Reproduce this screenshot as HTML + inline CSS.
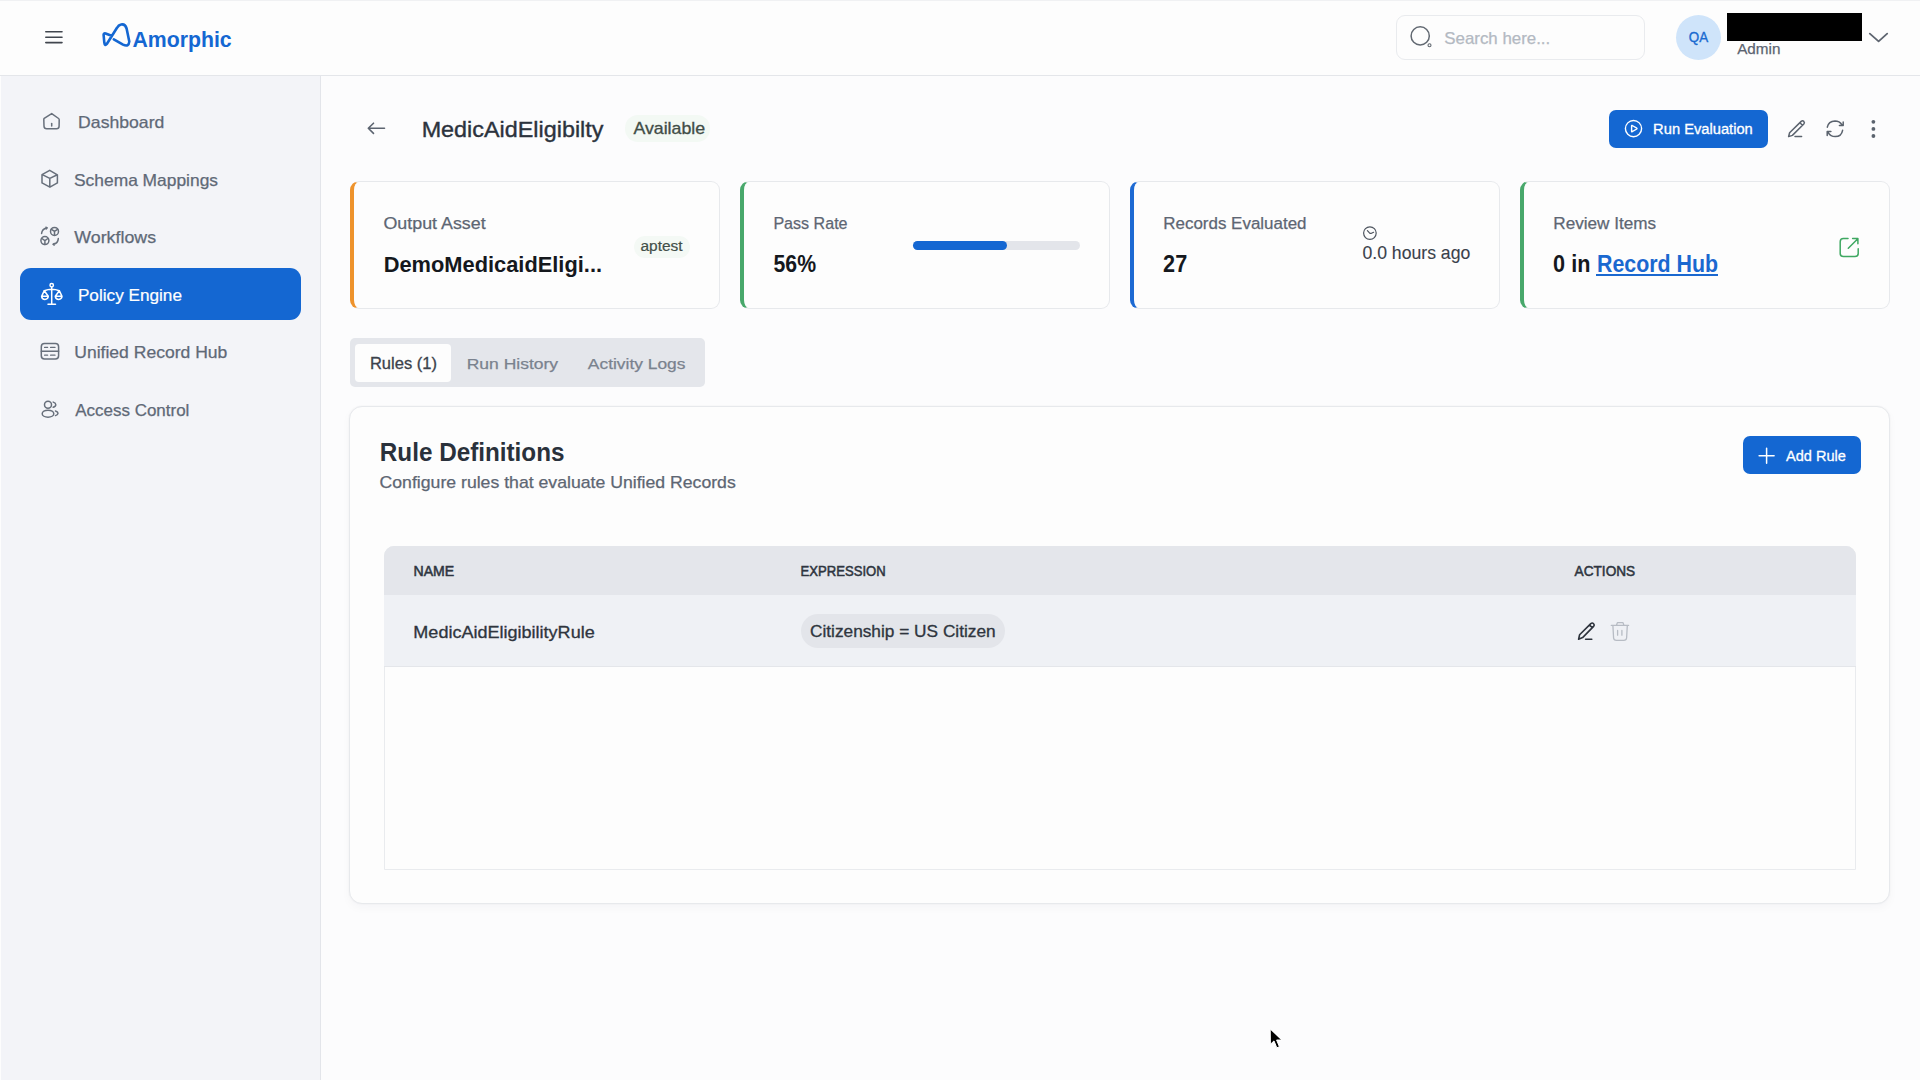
<!DOCTYPE html>
<html><head><meta charset="utf-8"><title>Amorphic - Policy Engine</title>
<style>
*{margin:0;padding:0;box-sizing:border-box}
html,body{width:1920px;height:1080px;overflow:hidden;background:#fcfcfd;font-family:"Liberation Sans",sans-serif}
.t{position:absolute;white-space:nowrap;line-height:1.1172;transform-origin:0 0}
.bl{display:inline-block;width:0;height:0;vertical-align:baseline}
.a{position:absolute}
svg{position:absolute;overflow:visible}
</style></head>
<body>
<!-- header -->
<div class="a" style="left:0;top:0;width:1920px;height:75px;background:#fdfdfd"></div>
<div class="a" style="left:0;top:0;width:1920px;height:1px;background:#f0f1f3"></div>
<div class="a" style="left:0;top:75px;width:1920px;height:1px;background:#e4e6ea"></div>
<!-- sidebar -->
<div class="a" style="left:0;top:76px;width:320px;height:1004px;background:#f3f4f8"></div>
<div class="a" style="left:0;top:76px;width:1px;height:1004px;background:#fdfdfd"></div>
<div class="a" style="left:320px;top:76px;width:1px;height:1004px;background:#e3e5ea"></div>
<div class="a" style="left:20px;top:268px;width:281px;height:52px;background:#1467d2;border-radius:11px"></div>
<!-- search -->
<div class="a" style="left:1396px;top:15px;width:249px;height:45px;border:1px solid #e9ebee;border-radius:9px;background:#fdfdfd"></div>
<!-- avatar -->
<div class="a" style="left:1676px;top:15px;width:45px;height:45px;border-radius:50%;background:#cfe4fa"></div>
<div class="a" style="left:1727px;top:13px;width:135px;height:28px;background:#000"></div>
<!-- available badge -->
<div class="a" style="left:625px;top:115px;width:85px;height:27px;border-radius:13px;background:#f3f9f4"></div>
<!-- run evaluation -->
<div class="a" style="left:1609px;top:110px;width:159px;height:38px;border-radius:7px;background:#1467d2"></div>
<!-- cards -->
<div class="a" style="left:350px;top:181px;width:370px;height:128px;border:1px solid #e7e9ec;border-left:4px solid #ee932c;border-radius:9px;background:#fdfdfd"></div>
<div class="a" style="left:740px;top:181px;width:370px;height:128px;border:1px solid #e7e9ec;border-left:4px solid #48a86b;border-radius:9px;background:#fdfdfd"></div>
<div class="a" style="left:1130px;top:181px;width:370px;height:128px;border:1px solid #e7e9ec;border-left:4px solid #1d6ad3;border-radius:9px;background:#fdfdfd"></div>
<div class="a" style="left:1520px;top:181px;width:370px;height:128px;border:1px solid #e7e9ec;border-left:4px solid #48a86b;border-radius:9px;background:#fdfdfd"></div>
<div class="a" style="left:634px;top:236px;width:56px;height:22px;border-radius:11px;background:#f4f9f5"></div>
<div class="a" style="left:913px;top:241px;width:167px;height:9px;border-radius:5px;background:#e3e5ea"></div>
<div class="a" style="left:913px;top:241px;width:94px;height:9px;border-radius:5px;background:#1467d2"></div>
<div class="a" style="left:1596px;top:273.5px;width:122px;height:2px;background:#1a68d0"></div>
<!-- tabs -->
<div class="a" style="left:350px;top:338px;width:355px;height:49px;border-radius:5px;background:#e4e6eb"></div>
<div class="a" style="left:355px;top:344px;width:96px;height:38px;border-radius:4px;background:#fdfdfd"></div>
<!-- panel -->
<div class="a" style="left:349px;top:406px;width:1541px;height:498px;border:1px solid #e7e9ec;border-radius:13px;background:#fdfdfd;box-shadow:0 0 2px rgba(30,40,60,0.05),0 4px 10px rgba(30,40,60,0.03)"></div>
<div class="a" style="left:1743px;top:436px;width:118px;height:38px;border-radius:7px;background:#1467d2"></div>
<!-- table -->
<div class="a" style="left:384px;top:546px;width:1472px;height:324px;border:1px solid #e9ebee;border-radius:10px 10px 0 0;background:#fdfdfd"></div>
<div class="a" style="left:384px;top:546px;width:1472px;height:49px;border-radius:10px 10px 0 0;background:#e4e6eb"></div>
<div class="a" style="left:384px;top:595px;width:1472px;height:72px;background:#eff1f5;border-bottom:1px solid #e4e6ea"></div>
<div class="a" style="left:801px;top:614px;width:204px;height:34px;border-radius:17px;background:#e3e5ea"></div>

<svg width="1920" height="1080" style="left:0;top:0" fill="none" stroke-linecap="round" stroke-linejoin="round">
 <!-- hamburger -->
 <g stroke="#41464e" stroke-width="1.6"><path d="M45.8 31.8H62M45.8 37.2H62M45.8 42.6H62"/></g>
 <!-- logo mark -->
 <path stroke="#1467d2" stroke-width="2.6" d="M113.8 39.3L123 44.6Q128.8 47.5 129.3 41.5L126.6 28.5Q125 23.5 121 24.6Q118.5 25.2 117 27.8L106.8 44Q104.8 46.5 104.3 42.5L103.6 34.8Q103.6 32.8 105.6 33.5L111.5 35.8"/>
 <!-- sidebar icons -->
 <g stroke="#676f7b" stroke-width="1.5">
  <path d="M51.7 113.6L44.2 118.4Q43.8 118.8 43.8 119.5L44 126.3Q44.2 128.8 46.6 128.8H56.6Q59 128.8 59.1 126.3L59.2 119.7Q59.2 118.9 58.6 118.5Z"/>
  <path d="M51.7 123.6V126.1"/>
  <path d="M49.7 170.3L57.4 174.8V182.9L49.9 187.2L42 182.9V174.7Z M42.3 174.7L49.8 178.4L57.3 174.8 M49.8 178.4V187"/>
  <circle cx="54.5" cy="231.4" r="4"/><path d="M54.5 231.4V235.2M54.5 231.4L51.5 229.3M54.5 231.4L57.5 229.3"/>
  <circle cx="44.9" cy="240.6" r="4"/><path d="M44.9 240.6V244.4M44.9 240.6L41.9 238.5M44.9 240.6L47.9 238.5"/>
  <path d="M41.6 233.5Q42 229 46.6 228"/><path d="M45.8 227.2L47.3 227.8L46.2 229" stroke-width="1.3"/>
  <path d="M58.3 238.6Q58 243.2 53.6 244.2"/><path d="M54.4 243.4L52.9 244.2L54.2 245.2" stroke-width="1.3"/>
  <rect x="41.3" y="343.5" width="17.3" height="15.5" rx="3.2"/><path d="M41.3 351.3H58.6"/>
  <path d="M44.6 347.4H47.6M50.6 347.4H55M44.6 355.2H47.6M50.6 355.2H55" stroke-width="1.3"/>
  <circle cx="48" cy="404.8" r="3.5"/><ellipse cx="48" cy="413.7" rx="5.8" ry="3.5"/>
  <path d="M53.2 402.1Q55.8 403 55.8 404.7Q55.8 406.5 53.2 407.3M55.5 411Q58 411.8 58 413.3Q58 414.9 55.5 415.6"/>
 </g>
 <g stroke="#ffffff" stroke-width="1.5">
  <circle cx="51.7" cy="285.3" r="1.7"/>
  <path d="M51.7 287.2V304M48 304.2H55.5M44.3 290.7Q51.7 287.6 59.3 290.7"/>
  <path d="M44.3 290.7L41.6 296.3H48.3Z M41.6 296.3Q42 299.4 45 299.4Q48 299.4 48.3 296.3"/>
  <path d="M59.3 290.7L55.3 296.3H62Z M55.3 296.3Q55.7 299.4 58.7 299.4Q61.7 299.4 62 296.3"/>
 </g>
 <!-- search icon -->
 <g stroke="#626972" stroke-width="1.5"><circle cx="1420.2" cy="35.9" r="9.1"/><circle cx="1429.5" cy="45.3" r="1.5" stroke-width="1.1"/></g>
 <!-- chevron -->
 <path stroke="#5e6570" stroke-width="1.8" d="M1869.8 33.6L1878.6 41.4L1887.2 33.6"/>
 <!-- back arrow -->
 <path stroke="#5c6470" stroke-width="1.6" d="M384.5 128.3H368.5M373.5 123.2L368.3 128.3L373.5 133.4"/>
 <!-- play -->
 <g stroke="#ffffff" stroke-width="1.4"><circle cx="1633.5" cy="128.6" r="8.1"/><path d="M1631.6 125.8V131.4Q1631.6 132 1632.2 131.7L1636.8 129Q1637.3 128.6 1636.8 128.2L1632.2 125.5Q1631.6 125.2 1631.6 125.8Z"/></g>
 <!-- header pencil / refresh / dots -->
 <g stroke="#5b636e" stroke-width="1.5">
  <path d="M1788.6 136.6L1789.6 132.8L1801.2 121.4Q1802.6 120.2 1803.8 121.4Q1805 122.7 1803.8 124L1792.4 135.4Z M1800 122.8L1802.4 125.2 M1795 136.6H1801.6"/>
  <path d="M1827.3 127.2Q1828.5 121.2 1835 121Q1839.5 121 1842 124.8M1843.2 121.9V125.6H1839.4M1842.6 130.3Q1841.5 136.5 1835.2 136.6Q1830.5 136.6 1828.2 132.6M1827.2 135.5V131.4H1830.9"/>
 </g>
 <g fill="#5b636e"><circle cx="1873.4" cy="121.8" r="1.9"/><circle cx="1873.4" cy="128.9" r="1.9"/><circle cx="1873.4" cy="136" r="1.9"/></g>
 <!-- clock -->
 <g stroke="#4d545e" stroke-width="1.2"><circle cx="1369.9" cy="233.1" r="6.3"/><path d="M1367.4 230.6L1369.5 232.9Q1370.5 233.6 1371.5 233.2L1373.6 232.3"/></g>
 <!-- external link -->
 <g stroke="#3fa862" stroke-width="1.5"><path d="M1848 238.6H1843.4Q1840.2 238.6 1840.2 241.8V253.4Q1840.2 256.5 1843.4 256.5H1855Q1858.2 256.5 1858.2 253.4V248.8 M1848.3 248.2L1857.8 238.7 M1852.6 238.6H1857.9V243.8"/></g>
 <!-- plus -->
 <g stroke="#ffffff" stroke-width="1.5"><path d="M1766.6 448.2V463.2M1759.1 455.7H1774.1"/></g>
 <!-- row pencil -->
 <g stroke="#2d333c" stroke-width="1.6"><path d="M1578.6 639.2L1579.6 634.8L1590.8 623.6Q1592.3 622.4 1593.6 623.7Q1594.9 625 1593.6 626.4L1582.6 637.6Z M1589.6 625L1592.2 627.6 M1585.6 639.2H1591.8"/></g>
 <!-- trash -->
 <g stroke="#b7bcc4" stroke-width="1.3"><path d="M1611.3 625.4H1628.6 M1616.5 625.2L1617.4 622.6H1623L1623.9 625.2 M1612.9 625.6L1613.6 638Q1613.8 640.4 1616.4 640.4H1623.8Q1626.4 640.4 1626.6 638L1627.3 625.6 M1617.6 630.4V635.2 M1621.9 630.4V635.2"/></g>
 <!-- cursor -->
 <path d="M1270.2 1029.2L1270.4 1044.3L1274 1040.9L1276.8 1047.8L1279.4 1046.7L1276.6 1040L1281.5 1040Z" fill="#000" stroke="#fff" stroke-width="1" stroke-linejoin="round"/>
</svg>

<div class="t" id="logo" style="left:132px;top:27.51px;font-size:22.24px;font-weight:bold;color:#1467d2;transform:translateX(0.522px) scaleX(0.9557)">Amorphic<i class="bl"></i></div>
<div class="t" id="n1" style="left:78px;top:113.31px;font-size:16.28px;font-weight:normal;color:#5f6977;-webkit-text-stroke:0.25px #5f6977;transform:translateX(0.113px) scaleX(1.0833)">Dashboard<i class="bl"></i></div>
<div class="t" id="n2" style="left:74px;top:170.60px;font-size:16.28px;font-weight:normal;color:#5f6977;-webkit-text-stroke:0.25px #5f6977;transform:translateX(0.025px) scaleX(1.0687)">Schema Mappings<i class="bl"></i></div>
<div class="t" id="n3" style="left:74px;top:227.71px;font-size:16.28px;font-weight:normal;color:#5f6977;-webkit-text-stroke:0.25px #5f6977;transform:translateX(0.345px) scaleX(1.0932)">Workflows<i class="bl"></i></div>
<div class="t" id="n4" style="left:77px;top:285.81px;font-size:16.28px;font-weight:normal;color:#ffffff;-webkit-text-stroke:0.2px #ffffff;transform:translateX(0.917px) scaleX(1.0557)">Policy Engine<i class="bl"></i></div>
<div class="t" id="n5" style="left:74px;top:342.91px;font-size:16.28px;font-weight:normal;color:#5f6977;-webkit-text-stroke:0.25px #5f6977;transform:translateX(0.283px) scaleX(1.0780)">Unified Record Hub<i class="bl"></i></div>
<div class="t" id="n6" style="left:75px;top:400.71px;font-size:16.28px;font-weight:normal;color:#5f6977;-webkit-text-stroke:0.25px #5f6977;transform:translateX(0.191px) scaleX(1.0439)">Access Control<i class="bl"></i></div>
<div class="t" id="search" style="left:1444px;top:29.70px;font-size:15.70px;font-weight:normal;color:#b3b9c2;-webkit-text-stroke:0.25px #b3b9c2;transform:translateX(0.263px) scaleX(1.0752)">Search here...<i class="bl"></i></div>
<div class="t" id="qa" style="left:1688px;top:29.11px;font-size:14.97px;font-weight:normal;color:#1a6ad0;-webkit-text-stroke:0.35px #1a6ad0;transform:translateX(0.692px) scaleX(0.8966)">QA<i class="bl"></i></div>
<div class="t" id="admin" style="left:1737px;top:40.01px;font-size:15.41px;font-weight:normal;color:#5b6370;-webkit-text-stroke:0.25px #5b6370;transform:translateX(0.155px) scaleX(0.9898)">Admin<i class="bl"></i></div>
<div class="t" id="title" style="left:421px;top:118.70px;font-size:21.37px;font-weight:normal;color:#2c333d;-webkit-text-stroke:0.35px #2c333d;transform:translateX(0.651px) scaleX(1.0941)">MedicAidEligibilty<i class="bl"></i></div>
<div class="t" id="avail" style="left:633px;top:120.40px;font-size:15.99px;font-weight:normal;color:#414d47;-webkit-text-stroke:0.3px #414d47;transform:translateX(0.379px) scaleX(1.1114)">Available<i class="bl"></i></div>
<div class="t" id="runev" style="left:1653px;top:120.76px;font-size:14.32px;font-weight:normal;color:#ffffff;-webkit-text-stroke:0.3px #ffffff;transform:translateX(0.107px) scaleX(1.0264)">Run Evaluation<i class="bl"></i></div>
<div class="t" id="c1l" style="left:383px;top:214.41px;font-size:16.42px;font-weight:normal;color:#5d6673;-webkit-text-stroke:0.25px #5d6673;transform:translateX(0.473px) scaleX(1.0877)">Output Asset<i class="bl"></i></div>
<div class="t" id="c1v" style="left:383px;top:251.60px;font-size:22.67px;font-weight:bold;color:#15181d;transform:translateX(0.637px) scaleX(0.9638)">DemoMedicaidEligi...<i class="bl"></i></div>
<div class="t" id="apt" style="left:640px;top:237.80px;font-size:14.83px;font-weight:normal;color:#434f49;-webkit-text-stroke:0.2px #434f49;transform:translateX(0.440px) scaleX(1.0422)">aptest<i class="bl"></i></div>
<div class="t" id="c2l" style="left:773px;top:214.41px;font-size:16.42px;font-weight:normal;color:#5d6673;-webkit-text-stroke:0.25px #5d6673;transform:translateX(0.393px) scaleX(0.9800)">Pass Rate<i class="bl"></i></div>
<div class="t" id="c2v" style="left:773px;top:251.90px;font-size:23.11px;font-weight:bold;color:#15181d;transform:translateX(0.555px) scaleX(0.9187)">56%<i class="bl"></i></div>
<div class="t" id="c3l" style="left:1163px;top:214.41px;font-size:16.42px;font-weight:normal;color:#5d6673;-webkit-text-stroke:0.25px #5d6673;transform:translateX(0.262px) scaleX(1.0335)">Records Evaluated<i class="bl"></i></div>
<div class="t" id="c3v" style="left:1163px;top:251.90px;font-size:23.11px;font-weight:bold;color:#15181d;transform:translateX(0.114px) scaleX(0.9376)">27<i class="bl"></i></div>
<div class="t" id="hrs" style="left:1362px;top:243.76px;font-size:17.59px;font-weight:normal;color:#3a414b;-webkit-text-stroke:0.1px #3a414b;transform:translateX(0.454px) scaleX(1.0028)">0.0 hours ago<i class="bl"></i></div>
<div class="t" id="c4l" style="left:1553px;top:214.41px;font-size:16.42px;font-weight:normal;color:#5d6673;-webkit-text-stroke:0.25px #5d6673;transform:translateX(0.289px) scaleX(1.0448)">Review Items<i class="bl"></i></div>
<div class="t" id="c4v" style="left:1553px;top:251.90px;font-size:23.11px;font-weight:bold;color:#15181d;transform:translateX(0.074px) scaleX(0.9370)">0 in<i class="bl"></i></div>
<div class="t" id="c4link" style="left:1596px;top:251.70px;font-size:23.11px;font-weight:bold;color:#1a68d0;transform:translateX(0.962px) scaleX(0.9252)">Record Hub<i class="bl"></i></div>
<div class="t" id="tab1" style="left:369px;top:354.81px;font-size:15.70px;font-weight:normal;color:#3b424c;-webkit-text-stroke:0.3px #3b424c;transform:translateX(0.929px) scaleX(1.0525)">Rules (1)<i class="bl"></i></div>
<div class="t" id="tab2" style="left:466px;top:354.90px;font-size:15.55px;font-weight:normal;color:#7a828e;-webkit-text-stroke:0.25px #7a828e;transform:translateX(0.704px) scaleX(1.1255)">Run History<i class="bl"></i></div>
<div class="t" id="tab3" style="left:587px;top:354.90px;font-size:15.55px;font-weight:normal;color:#7a828e;-webkit-text-stroke:0.25px #7a828e;transform:translateX(0.874px) scaleX(1.1177)">Activity Logs<i class="bl"></i></div>
<div class="t" id="rd" style="left:379px;top:437.81px;font-size:25.44px;font-weight:bold;color:#2a313b;transform:translateX(0.799px) scaleX(0.9540)">Rule Definitions<i class="bl"></i></div>
<div class="t" id="rdsub" style="left:379px;top:474.31px;font-size:15.99px;font-weight:normal;color:#5d6673;-webkit-text-stroke:0.25px #5d6673;transform:translateX(0.559px) scaleX(1.1043)">Configure rules that evaluate Unified Records<i class="bl"></i></div>
<div class="t" id="addr" style="left:1785px;top:446.60px;font-size:15.55px;font-weight:normal;color:#ffffff;-webkit-text-stroke:0.3px #ffffff;transform:translateX(0.983px) scaleX(0.9356)">Add Rule<i class="bl"></i></div>
<div class="t" id="th1" style="left:413px;top:564.26px;font-size:13.74px;font-weight:normal;color:#2e3540;-webkit-text-stroke:0.5px #2e3540;transform:translateX(0.541px) scaleX(1.0260)">NAME<i class="bl"></i></div>
<div class="t" id="th2" style="left:800px;top:564.26px;font-size:13.74px;font-weight:normal;color:#2e3540;-webkit-text-stroke:0.5px #2e3540;transform:translateX(0.573px) scaleX(0.9535)">EXPRESSION<i class="bl"></i></div>
<div class="t" id="th3" style="left:1574px;top:564.01px;font-size:13.74px;font-weight:normal;color:#2e3540;-webkit-text-stroke:0.5px #2e3540;transform:translateX(0.599px) scaleX(0.9924)">ACTIONS<i class="bl"></i></div>
<div class="t" id="r1" style="left:413px;top:622.91px;font-size:16.13px;font-weight:normal;color:#2f353e;-webkit-text-stroke:0.3px #2f353e;transform:translateX(0.333px) scaleX(1.1191)">MedicAidEligibilityRule<i class="bl"></i></div>
<div class="t" id="chip" style="left:809px;top:623.01px;font-size:15.99px;font-weight:normal;color:#2f353e;-webkit-text-stroke:0.3px #2f353e;transform:translateX(0.951px) scaleX(1.0804)">Citizenship = US Citizen<i class="bl"></i></div>
</body></html>
